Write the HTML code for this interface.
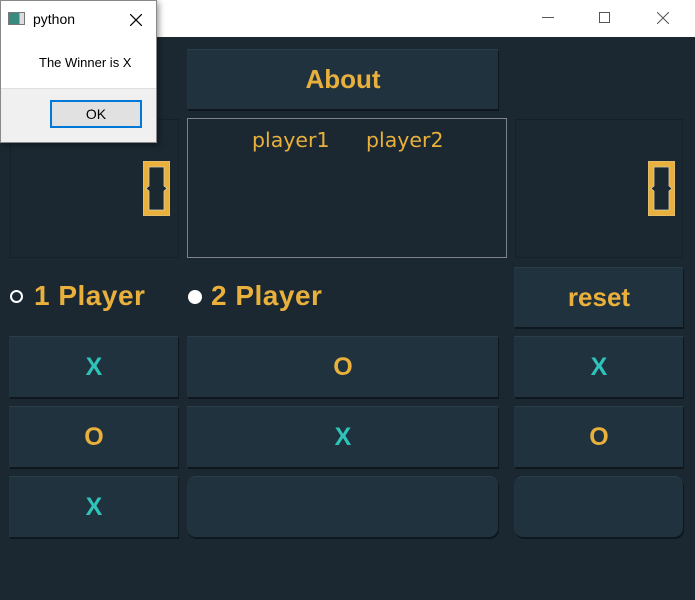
<!DOCTYPE html>
<html><head><style>
body{margin:0;width:695px;height:600px;background:#1b2831;position:relative;overflow:hidden;font-family:"Liberation Sans",sans-serif}
.a{position:absolute;box-sizing:border-box}
.btn{background:#1f323e;border-top:1px solid #2a3e4a;border-left:1px solid #22343f;box-shadow:1px 2px 0 #0e171d;display:flex;align-items:center;justify-content:center;font-size:25px;font-weight:bold}
.y{color:#e9b03c}.c{color:#2ec4b9}
.pan{border:1px solid #14212a}
</style></head><body>
<div class="a" style="left:0;top:0;width:695px;height:37px;background:#fff"></div>
<div class="a" style="left:542px;top:17px;width:12px;height:1px;background:#555"></div>
<div class="a" style="left:599px;top:12px;width:11px;height:11px;border:1px solid #555"></div>
<svg class="a" style="left:657px;top:12px" width="12" height="12"><path d="M0 0L12 12M12 0L0 12" stroke="#555" stroke-width="1"/></svg>

<div class="a btn y" style="left:187px;top:49px;width:311px;height:60px;font-size:26px">About</div>
<div class="a pan" style="left:10px;top:119px;width:169px;height:139px"></div>
<div class="a" style="left:187px;top:118px;width:320px;height:140px;border:1px solid #7d8388"></div>
<div class="a y" style="left:252px;top:128px;font-size:20.5px;font-family:'DejaVu Sans',sans-serif">player1</div>
<div class="a y" style="left:366px;top:128px;font-size:20.5px;font-family:'DejaVu Sans',sans-serif">player2</div>
<div class="a pan" style="left:515px;top:119px;width:168px;height:139px"></div>
<svg class="a" style="left:143px;top:161px" width="27" height="55"><path d="M0 0H27V55H0Z M6 6V25L3 27.5L6 30V49H21V30L24 27.5L21 25V6Z" fill="#e9b03c" fill-rule="evenodd" stroke="#d9d0b0" stroke-width="0.8"/></svg>
<svg class="a" style="left:648px;top:161px" width="27" height="55"><path d="M0 0H27V55H0Z M6 6V25L3 27.5L6 30V49H21V30L24 27.5L21 25V6Z" fill="#e9b03c" fill-rule="evenodd" stroke="#d9d0b0" stroke-width="0.8"/></svg>

<div class="a" style="left:10px;top:290px;width:13px;height:13px;border-radius:50%;border:2px solid #fff;background:#1b2831"></div>
<div class="a y" style="left:34px;top:280px;font-size:28px;font-weight:bold;letter-spacing:0.5px">1 Player</div>
<div class="a" style="left:188px;top:290px;width:14px;height:14px;border-radius:50%;background:#fff"></div>
<div class="a y" style="left:211px;top:280px;font-size:28px;font-weight:bold;letter-spacing:0.5px">2 Player</div>
<div class="a btn y" style="left:514px;top:267px;width:169px;height:60px;font-size:26px">reset</div>

<div class="a btn c" style="left:9px;top:336px;width:169px;height:61px">X</div>
<div class="a btn y" style="left:187px;top:336px;width:311px;height:61px">O</div>
<div class="a btn c" style="left:514px;top:336px;width:169px;height:61px">X</div>
<div class="a btn y" style="left:9px;top:406px;width:169px;height:61px">O</div>
<div class="a btn c" style="left:187px;top:406px;width:311px;height:61px">X</div>
<div class="a btn y" style="left:514px;top:406px;width:169px;height:61px">O</div>
<div class="a btn c" style="left:9px;top:476px;width:169px;height:61px">X</div>
<div class="a btn" style="left:187px;top:476px;width:311px;height:61px;border-radius:9px"></div>
<div class="a btn" style="left:514px;top:476px;width:169px;height:61px;border-radius:9px"></div>

<div class="a" style="left:0;top:0;width:157px;height:143px;background:#fff;border:1px solid #888;box-shadow:2px 2px 6px rgba(0,0,0,.4)"></div>
<div class="a" style="left:8px;top:12px;width:17px;height:13px;border:1px solid #777;background:linear-gradient(90deg,#3a8a80 70%,#ddd 70%)"></div>
<div class="a" style="left:33px;top:11px;font-size:14px;color:#000">python</div>
<svg class="a" style="left:130px;top:14px" width="12" height="12"><path d="M0 0L12 12M12 0L0 12" stroke="#000" stroke-width="1.2"/></svg>
<div class="a" style="left:39px;top:55px;font-size:13px;color:#000">The Winner is X</div>
<div class="a" style="left:1px;top:88px;width:155px;height:54px;background:#f0f0f0;border-top:1px solid #dfdfdf"></div>
<div class="a" style="left:50px;top:100px;width:92px;height:28px;background:#e1e1e1;border:2px solid #0078d7;font-size:14px;display:flex;align-items:center;justify-content:center;color:#000">OK</div>
</body></html>
